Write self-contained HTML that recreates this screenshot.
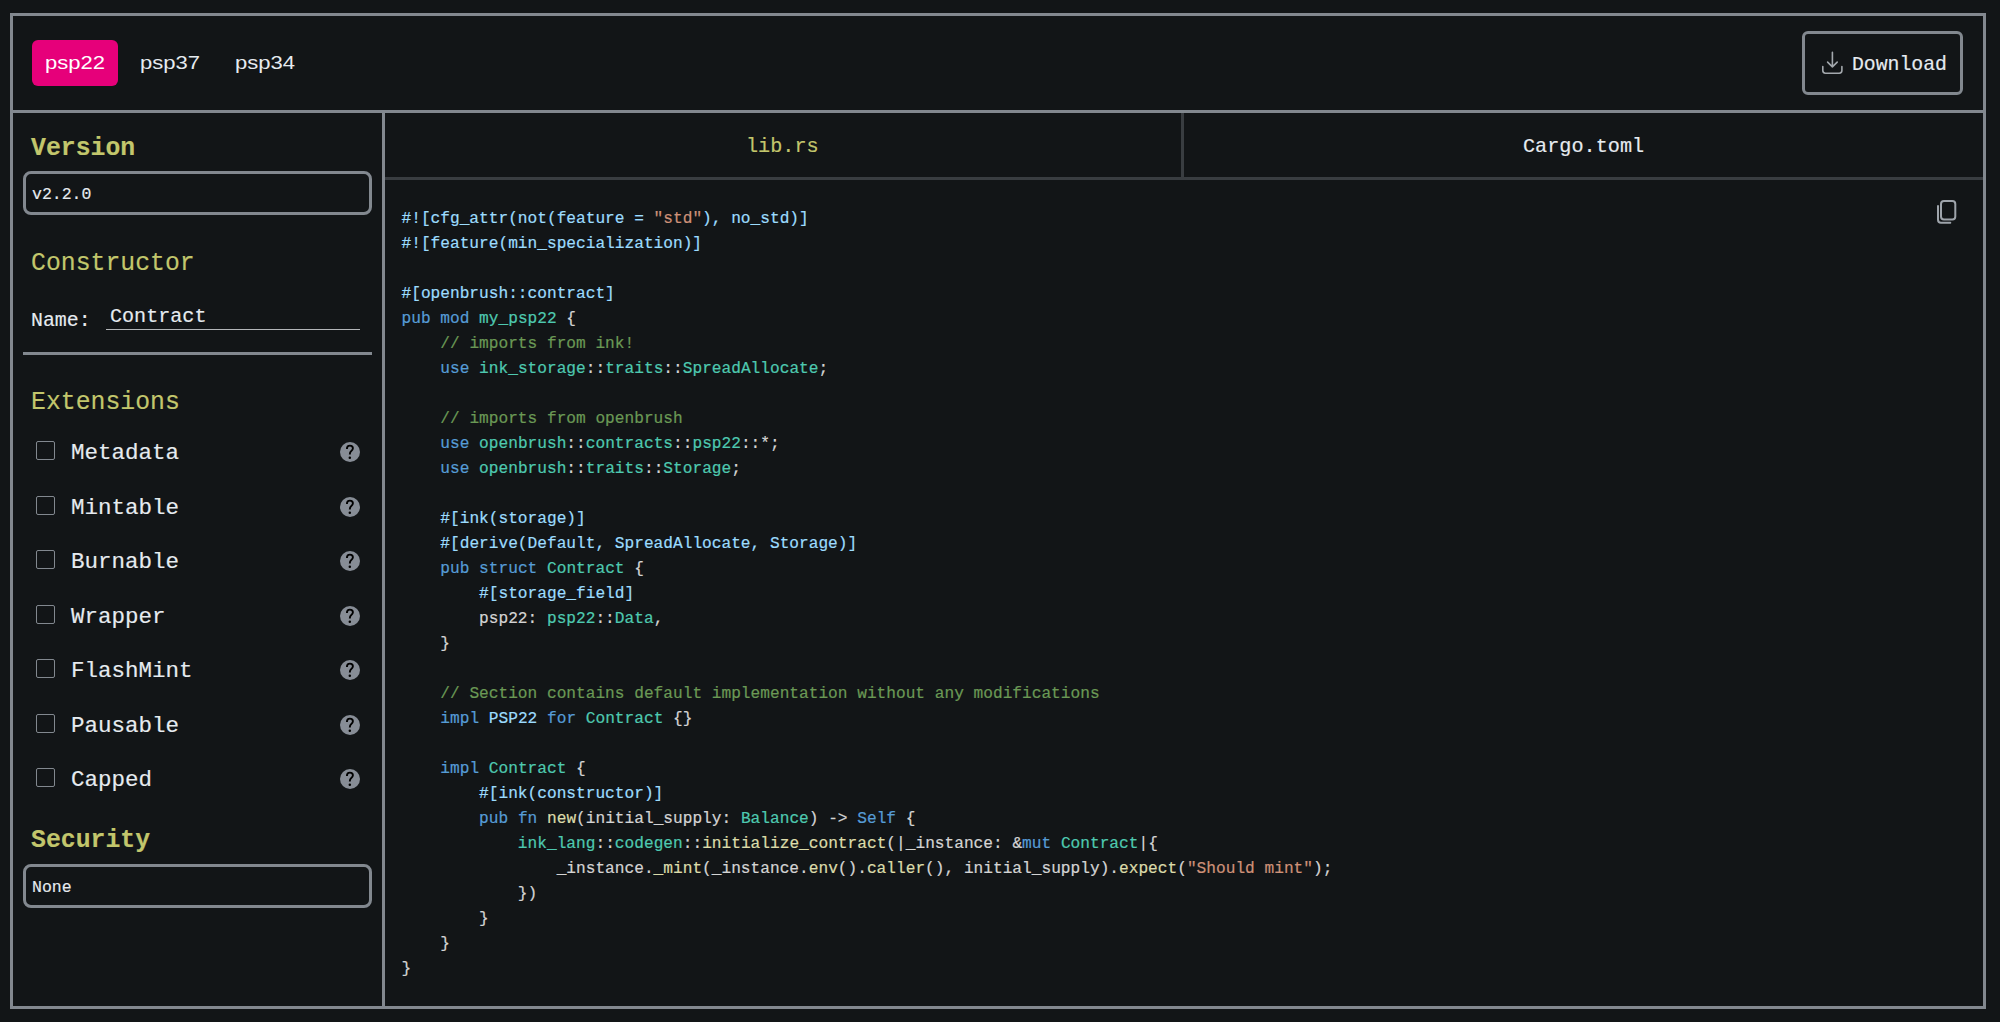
<!DOCTYPE html>
<html><head><meta charset="utf-8">
<style>
html,body{margin:0;padding:0;width:2000px;height:1022px;overflow:hidden;background:#121517;}
*{box-sizing:border-box;}
.abs{position:absolute;}
.mono{font-family:"Liberation Mono",monospace;-webkit-text-stroke:0.15px currentColor;}
.sans{font-family:"Liberation Sans",sans-serif;}
#frame{position:absolute;left:10px;top:13px;width:1976px;height:996px;border:3px solid #82888f;}
#hdrline{position:absolute;left:13px;top:110px;width:1970px;height:3px;background:#82888f;}
#sideline{position:absolute;left:382px;top:113px;width:3px;height:893px;background:#82888f;}
#tabline{position:absolute;left:385px;top:177px;width:1598px;height:3px;background:#393d41;}
#tabsep{position:absolute;left:1181px;top:113px;width:3px;height:64px;background:#393d41;}
.pill{position:absolute;top:40px;height:46px;width:85.5px;border-radius:6px;}
.t{position:absolute;white-space:pre;line-height:1;}
.box{position:absolute;border:3px solid #82888f;border-radius:8px;}
.head{color:#c2c66c;font-size:24.8px;transform:scaleY(1.06);transform-origin:0 28px;}
.wt{color:#e6ebf0;}
.cb{position:absolute;left:36px;width:19px;height:19px;border:1.5px solid #82888f;border-radius:2px;}
.q{position:absolute;left:339.8px;width:20px;height:20px;border-radius:50%;background:#878d96;}
#code{position:absolute;left:401.5px;top:207px;width:1500px;height:800px;font-family:"Liberation Mono",monospace;font-size:16.16px;line-height:25px;color:#d4d4d4;white-space:pre;-webkit-text-stroke:0.2px currentColor;}
.ln{position:absolute;left:0;height:25px;transform:scaleY(1.06);transform-origin:0 16px;}
.k{color:#569cd6}.c{color:#6a9955}.s{color:#ce9178}.n{color:#4ec9b0}.f{color:#dcdcaa}.a{color:#9cdcfe}
</style></head><body>
<div id="frame"></div>
<div id="hdrline"></div>
<div id="sideline"></div>
<div id="tabline"></div>
<div id="tabsep"></div>

<!-- header tabs -->
<div class="pill" style="left:32px;background:#e6007a;"></div>
<div class="t sans" style="left:44.5px;top:54px;font-size:18.5px;color:#fff;transform:scaleX(1.19);transform-origin:0 0;">psp22</div>
<div class="t sans wt" style="left:140px;top:54px;font-size:18.5px;transform:scaleX(1.19);transform-origin:0 0;">psp37</div>
<div class="t sans wt" style="left:235px;top:54px;font-size:18.5px;transform:scaleX(1.19);transform-origin:0 0;">psp34</div>

<!-- download -->
<div class="box" style="left:1802px;top:31px;width:161px;height:64px;border-radius:6px;"></div>
<svg class="abs" style="left:1815px;top:45px;" width="36" height="36" viewBox="0 0 36 36">
  <path d="M17.4 7.2 V22 M12.6 17.1 L17.4 21.9 L22.2 17.1" fill="none" stroke="#a3a8ad" stroke-width="1.6" stroke-linecap="round" stroke-linejoin="round"/>
  <path d="M7.8 21.6 V25.6 Q7.8 28.2 10.4 28.2 H24.3 Q26.9 28.2 26.9 25.6 V21.6" fill="none" stroke="#a3a8ad" stroke-width="1.6" stroke-linecap="round"/>
</svg>
<div class="t mono wt" style="left:1852px;top:55.5px;font-size:19.8px;">Download</div>

<!-- sidebar -->
<div class="t mono head" style="left:31px;top:136.8px;font-weight:bold;">Version</div>
<div class="box" style="left:23px;top:171px;width:349px;height:44px;"></div>
<div class="t mono wt" style="left:32px;top:187.4px;font-size:16.5px;">v2.2.0</div>

<div class="t mono head" style="left:31px;top:251.8px;">Constructor</div>
<div class="t mono wt" style="left:31px;top:311.2px;font-size:19.9px;">Name:</div>
<div class="t mono wt" style="left:110px;top:306.5px;font-size:20.1px;">Contract</div>
<div class="abs" style="left:106px;top:329px;width:254px;height:1.3px;background:#b3b6b9;"></div>
<div class="abs" style="left:23px;top:352px;width:349px;height:3px;background:#82888f;"></div>

<div class="t mono head" style="left:31px;top:390.6px;">Extensions</div>

<div class="cb" style="top:441px;"></div><div class="t mono wt" style="left:71px;top:442px;font-size:22.5px;">Metadata</div><div class="q" style="top:442px;"><svg width="20" height="20" viewBox="0 0 20 20" style="display:block"><path d="M6.9 6.9 Q6.9 3.6 9.9 3.6 Q12.9 3.6 12.9 6.3 Q12.9 7.8 11.3 9.0 Q9.8 10.1 9.8 12.6" fill="none" stroke="#000" stroke-width="1.9" stroke-linecap="butt"/><circle cx="9.8" cy="15.7" r="1.25" fill="#000"/></svg></div>
<div class="cb" style="top:495.5px;"></div><div class="t mono wt" style="left:71px;top:496.5px;font-size:22.5px;">Mintable</div><div class="q" style="top:496.5px;"><svg width="20" height="20" viewBox="0 0 20 20" style="display:block"><path d="M6.9 6.9 Q6.9 3.6 9.9 3.6 Q12.9 3.6 12.9 6.3 Q12.9 7.8 11.3 9.0 Q9.8 10.1 9.8 12.6" fill="none" stroke="#000" stroke-width="1.9" stroke-linecap="butt"/><circle cx="9.8" cy="15.7" r="1.25" fill="#000"/></svg></div>
<div class="cb" style="top:550px;"></div><div class="t mono wt" style="left:71px;top:551px;font-size:22.5px;">Burnable</div><div class="q" style="top:551px;"><svg width="20" height="20" viewBox="0 0 20 20" style="display:block"><path d="M6.9 6.9 Q6.9 3.6 9.9 3.6 Q12.9 3.6 12.9 6.3 Q12.9 7.8 11.3 9.0 Q9.8 10.1 9.8 12.6" fill="none" stroke="#000" stroke-width="1.9" stroke-linecap="butt"/><circle cx="9.8" cy="15.7" r="1.25" fill="#000"/></svg></div>
<div class="cb" style="top:604.5px;"></div><div class="t mono wt" style="left:71px;top:605.5px;font-size:22.5px;">Wrapper</div><div class="q" style="top:605.5px;"><svg width="20" height="20" viewBox="0 0 20 20" style="display:block"><path d="M6.9 6.9 Q6.9 3.6 9.9 3.6 Q12.9 3.6 12.9 6.3 Q12.9 7.8 11.3 9.0 Q9.8 10.1 9.8 12.6" fill="none" stroke="#000" stroke-width="1.9" stroke-linecap="butt"/><circle cx="9.8" cy="15.7" r="1.25" fill="#000"/></svg></div>
<div class="cb" style="top:659px;"></div><div class="t mono wt" style="left:71px;top:660px;font-size:22.5px;">FlashMint</div><div class="q" style="top:660px;"><svg width="20" height="20" viewBox="0 0 20 20" style="display:block"><path d="M6.9 6.9 Q6.9 3.6 9.9 3.6 Q12.9 3.6 12.9 6.3 Q12.9 7.8 11.3 9.0 Q9.8 10.1 9.8 12.6" fill="none" stroke="#000" stroke-width="1.9" stroke-linecap="butt"/><circle cx="9.8" cy="15.7" r="1.25" fill="#000"/></svg></div>
<div class="cb" style="top:713.5px;"></div><div class="t mono wt" style="left:71px;top:714.5px;font-size:22.5px;">Pausable</div><div class="q" style="top:714.5px;"><svg width="20" height="20" viewBox="0 0 20 20" style="display:block"><path d="M6.9 6.9 Q6.9 3.6 9.9 3.6 Q12.9 3.6 12.9 6.3 Q12.9 7.8 11.3 9.0 Q9.8 10.1 9.8 12.6" fill="none" stroke="#000" stroke-width="1.9" stroke-linecap="butt"/><circle cx="9.8" cy="15.7" r="1.25" fill="#000"/></svg></div>
<div class="cb" style="top:768px;"></div><div class="t mono wt" style="left:71px;top:769px;font-size:22.5px;">Capped</div><div class="q" style="top:769px;"><svg width="20" height="20" viewBox="0 0 20 20" style="display:block"><path d="M6.9 6.9 Q6.9 3.6 9.9 3.6 Q12.9 3.6 12.9 6.3 Q12.9 7.8 11.3 9.0 Q9.8 10.1 9.8 12.6" fill="none" stroke="#000" stroke-width="1.9" stroke-linecap="butt"/><circle cx="9.8" cy="15.7" r="1.25" fill="#000"/></svg></div>

<div class="t mono head" style="left:31px;top:829px;font-weight:bold;">Security</div>
<div class="box" style="left:23px;top:864px;width:349px;height:44px;"></div>
<div class="t mono wt" style="left:32px;top:880px;font-size:16.5px;">None</div>

<!-- file tabs -->
<div class="t mono" style="left:746px;top:136.7px;font-size:20.2px;color:#c2c66c;">lib.rs</div>
<div class="t mono wt" style="left:1523px;top:136.7px;font-size:20.2px;">Cargo.toml</div>

<!-- copy icon -->
<svg class="abs" style="left:1930px;top:195px;" width="32" height="32" viewBox="0 0 32 32">
  <rect x="11" y="5.9" width="14.3" height="18.5" rx="3" fill="none" stroke="#9ea4ab" stroke-width="2"/>
  <path d="M8 11 V24.7 Q8 27.7 11 27.7 H20.3" fill="none" stroke="#9ea4ab" stroke-width="2" stroke-linecap="round"/>
</svg>

<div id="code"><div class="ln" style="top:0px"><span class="a">#![cfg_attr(not(feature = </span><span class="s">"std"</span><span class="a">), no_std)]</span></div><div class="ln" style="top:25px"><span class="a">#![feature(min_specialization)]</span></div><div class="ln" style="top:50px"> </div><div class="ln" style="top:75px"><span class="a">#[openbrush::contract]</span></div><div class="ln" style="top:100px"><span class="k">pub</span> <span class="k">mod</span> <span class="n">my_psp22</span> {</div><div class="ln" style="top:125px">    <span class="c">// imports from ink!</span></div><div class="ln" style="top:150px">    <span class="k">use</span> <span class="n">ink_storage</span>::<span class="n">traits</span>::<span class="n">SpreadAllocate</span>;</div><div class="ln" style="top:175px"> </div><div class="ln" style="top:200px">    <span class="c">// imports from openbrush</span></div><div class="ln" style="top:225px">    <span class="k">use</span> <span class="n">openbrush</span>::<span class="n">contracts</span>::<span class="n">psp22</span>::*;</div><div class="ln" style="top:250px">    <span class="k">use</span> <span class="n">openbrush</span>::<span class="n">traits</span>::<span class="n">Storage</span>;</div><div class="ln" style="top:275px"> </div><div class="ln" style="top:300px">    <span class="a">#[ink(storage)]</span></div><div class="ln" style="top:325px">    <span class="a">#[derive(Default, SpreadAllocate, Storage)]</span></div><div class="ln" style="top:350px">    <span class="k">pub</span> <span class="k">struct</span> <span class="n">Contract</span> {</div><div class="ln" style="top:375px">        <span class="a">#[storage_field]</span></div><div class="ln" style="top:400px">        psp22: <span class="n">psp22</span>::<span class="n">Data</span>,</div><div class="ln" style="top:425px">    }</div><div class="ln" style="top:450px"> </div><div class="ln" style="top:475px">    <span class="c">// Section contains default implementation without any modifications</span></div><div class="ln" style="top:500px">    <span class="k">impl</span> <span class="a">PSP22</span> <span class="k">for</span> <span class="n">Contract</span> {}</div><div class="ln" style="top:525px"> </div><div class="ln" style="top:550px">    <span class="k">impl</span> <span class="n">Contract</span> {</div><div class="ln" style="top:575px">        <span class="a">#[ink(constructor)]</span></div><div class="ln" style="top:600px">        <span class="k">pub</span> <span class="k">fn</span> <span class="f">new</span>(initial_supply: <span class="n">Balance</span>) -&gt; <span class="k">Self</span> {</div><div class="ln" style="top:625px">            <span class="n">ink_lang</span>::<span class="n">codegen</span>::<span class="f">initialize_contract</span>(|_instance: &amp;<span class="k">mut</span> <span class="n">Contract</span>|{</div><div class="ln" style="top:650px">                _instance.<span class="f">_mint</span>(_instance.<span class="f">env</span>().<span class="f">caller</span>(), initial_supply).<span class="f">expect</span>(<span class="s">"Should mint"</span>);</div><div class="ln" style="top:675px">            })</div><div class="ln" style="top:700px">        }</div><div class="ln" style="top:725px">    }</div><div class="ln" style="top:750px">}</div></div><!--endcode-->
</body></html>
